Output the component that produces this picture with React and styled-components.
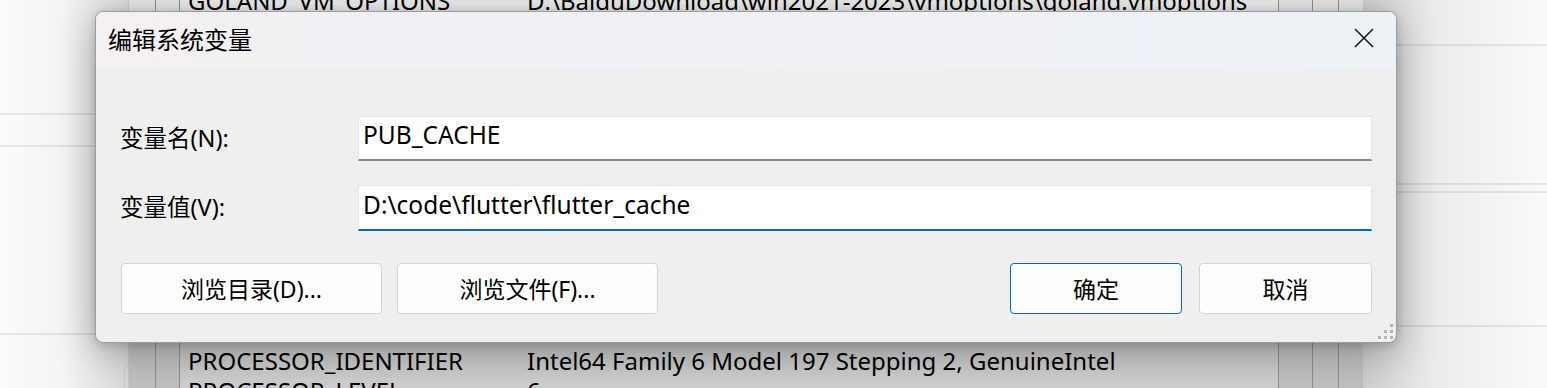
import React from 'react'
import styled, { createGlobalStyle } from 'styled-components'

const GlobalStyle = createGlobalStyle`
  html, body { margin: 0; padding: 0; background: #f7f7f7; }
  body { font-family: "Noto Sans", "Noto Sans CJK SC", sans-serif; }
  * { box-sizing: border-box; }
`

// rows hidden under the dialog are left blank
const rows = [
  ['GOLAND_VM_OPTIONS', 'D:\\BaiduDownload\\win2021-2023\\vmoptions\\goland.vmoptions'],
  ...Array.from({ length: 11 }, () => ['', '']),
  ['PROCESSOR_IDENTIFIER', 'Intel64 Family 6 Model 197 Stepping 2, GenuineIntel'],
  ['PROCESSOR_LEVEL', '6'],
]

export default function App() {
  return (
    <>
      <GlobalStyle />
      <Desktop>
        <LeftPane>
          <PaneLine $top={113} />
          <PaneLine $top={145} />
          <PaneLine $top={333} />
          <PaneTab />
        </LeftPane>
        <Gutter $w={27} />
        <Gutter $w={24} $dark />
        <ListArea>
          <ListRows>
            {rows.map(([name, value], i) => (
              <ListRow key={i}>
                <NameCell>{name}</NameCell>
                <ValueCell>{value}</ValueCell>
              </ListRow>
            ))}
          </ListRows>
        </ListArea>
        <Gutter $w={34} $dark />
        <Gutter $w={26} $dark />
        <Gutter $w={25} $dark />
        <RightPane>
          <PaneLine $top={44} />
          <PaneLine $top={183} />
          <PaneLine $top={191} />
          <PaneLine $top={325} />
        </RightPane>

        <Dialog>
          <TitleBar>
            <Title>编辑系统变量</Title>
            <CloseButton>
              <svg width="20" height="20" viewBox="0 0 20 20">
                <path d="M1 1 L19 19 M19 1 L1 19" stroke="#1b1b1b" strokeWidth="1.6" fill="none" />
              </svg>
            </CloseButton>
          </TitleBar>
          <Body>
            <FieldRow>
              <Label>变量名(N):</Label>
              <Field>PUB_CACHE</Field>
            </FieldRow>
            <FieldRow $gap={24}>
              <Label>变量值(V):</Label>
              <Field $focused>D:\code\flutter\flutter_cache</Field>
            </FieldRow>
            <ButtonRow>
              <ButtonGroup>
                <Button $w={261}>浏览目录(D)...</Button>
                <Button $w={261}>浏览文件(F)...</Button>
              </ButtonGroup>
              <ButtonGroup $gap={17}>
                <Button $w={172} $primary>确定</Button>
                <Button $w={173}>取消</Button>
              </ButtonGroup>
            </ButtonRow>
          </Body>
          <Grip>
            <svg width="16" height="16" viewBox="0 0 16 16">
              <rect x="13" y="1" width="3" height="3" fill="#b4b4b4" />
              <rect x="7" y="7" width="3" height="3" fill="#b4b4b4" />
              <rect x="13" y="7" width="3" height="3" fill="#b4b4b4" />
              <rect x="1" y="13" width="3" height="3" fill="#b4b4b4" />
              <rect x="7" y="13" width="3" height="3" fill="#b4b4b4" />
              <rect x="13" y="13" width="3" height="3" fill="#b4b4b4" />
            </svg>
          </Grip>
        </Dialog>
      </Desktop>
    </>
  )
}

const Desktop = styled.div`
  position: relative;
  display: flex;
  width: 1547px;
  height: 388px;
  overflow: hidden;
  background: #f7f7f7;
`

const LeftPane = styled.div`
  position: relative;
  width: 128px;
  flex-shrink: 0;
  background: linear-gradient(to right, #fbfbfb 0%, #f4f4f4 50%, #d9d9d9 100%);
`

const RightPane = styled.div`
  position: relative;
  flex: 1;
  background: linear-gradient(to right, #cfcfcf 0%, #ececec 40%, #fafafa 100%);
`

const PaneLine = styled.div`
  position: absolute;
  left: 0;
  right: 0;
  top: ${({ $top }) => $top}px;
  height: 2px;
  background: rgba(0, 0, 0, 0.08);
`

const PaneTab = styled.div`
  position: absolute;
  left: 124px;
  top: 365px;
  width: 10px;
  height: 40px;
  border: 1px solid #c8c8c8;
  border-radius: 4px 0 0 0;
`

const Gutter = styled.div`
  width: ${({ $w }) => $w}px;
  flex-shrink: 0;
  border-left: 1px solid ${({ $dark }) => ($dark ? '#8f8f8f' : '#c9c9c9')};
  background: linear-gradient(to bottom, #e6e6e6 0%, #d0d0d0 60%, #c0c0c0 100%);
`

const ListArea = styled.div`
  width: 1099px;
  flex-shrink: 0;
  border-left: 1px solid #8f8f8f;
  background: linear-gradient(to bottom, #ebebeb 0%, #d2d2d2 60%, #c6c6c6 85%, #cfcfcf 100%);
  overflow: hidden;
`

const ListRows = styled.div`
  margin-top: -15px;
  display: flex;
  flex-direction: column;
`

const ListRow = styled.div`
  display: flex;
  align-items: center;
  height: 30px;
  font-size: 24px;
  color: #000;
  white-space: nowrap;
`

const NameCell = styled.span`
  width: 347px;
  padding-left: 8px;
  flex-shrink: 0;
`

const ValueCell = styled.span``

const Dialog = styled.div`
  position: absolute;
  left: 95px;
  top: 11px;
  width: 1302px;
  height: 332px;
  display: flex;
  flex-direction: column;
  border: 1px solid #9c9c9c;
  border-radius: 8px;
  overflow: hidden;
  background: #efefef;
  box-shadow: 0 10px 40px rgba(0, 0, 0, 0.3), 0 2px 8px rgba(0, 0, 0, 0.15);
`

const TitleBar = styled.div`
  display: flex;
  align-items: center;
  justify-content: space-between;
  height: 56px;
  flex-shrink: 0;
  padding: 0 22px 0 12px;
  background: linear-gradient(to right, #f4f0f3 0%, #f0f0f6 45%, #edf2f7 100%);
`

const Title = styled.div`
  font-family: "Noto Sans CJK SC", sans-serif;
  font-size: 24px;
  color: #000;
  margin-top: -4px;
`

const CloseButton = styled.div`
  display: flex;
  width: 20px;
  height: 20px;
  margin-top: -4px;
`

const Body = styled.div`
  flex: 1;
  display: flex;
  flex-direction: column;
  padding: 48px 24px 0 24px;
`

const FieldRow = styled.div`
  display: flex;
  align-items: center;
  margin-top: ${({ $gap }) => $gap || 0}px;
`

const Label = styled.div`
  width: 238px;
  flex-shrink: 0;
  font-size: 23.5px;
  color: #000;
  padding-bottom: 4px;
`

const Field = styled.div`
  flex: 1;
  height: ${({ $focused }) => ($focused ? 46 : 45)}px;
  display: flex;
  align-items: center;
  padding: 0 4px 7px;
  background: #fff;
  border: 1px solid #e4e4e4;
  border-bottom: 2px solid ${({ $focused }) => ($focused ? '#0067c0' : '#868686')};
  font-size: 24.5px;
  color: #000;
  white-space: nowrap;
`

const ButtonRow = styled.div`
  display: flex;
  justify-content: space-between;
  margin-top: 32px;
  padding-left: 1px;
`

const ButtonGroup = styled.div`
  display: flex;
  gap: ${({ $gap }) => $gap || 15}px;
`

const Button = styled.div`
  width: ${({ $w }) => $w}px;
  height: 51px;
  display: flex;
  align-items: center;
  justify-content: center;
  background: #fdfdfd;
  border: 1px solid ${({ $primary }) => ($primary ? '#0067c0' : '#d3d3d3')};
  border-radius: 4px;
  font-size: 23px;
  color: #000;
  padding-bottom: 2px;
`

const Grip = styled.div`
  position: absolute;
  right: 3px;
  bottom: 3px;
  display: flex;
`
